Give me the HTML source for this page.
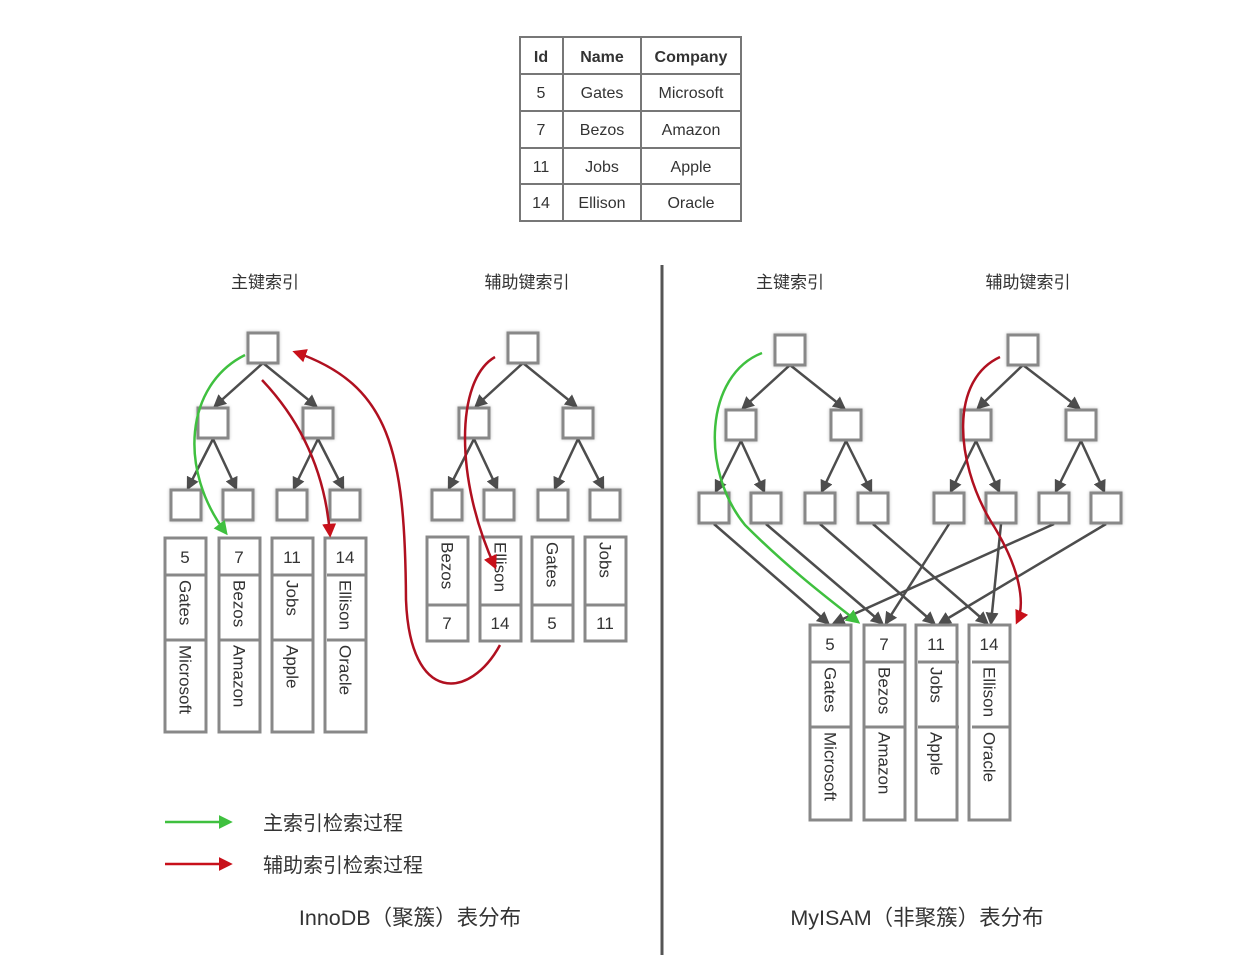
<!DOCTYPE html>
<html><head><meta charset="utf-8"><style>
html,body{margin:0;padding:0;background:#fff;}
svg{display:block;font-family:"Liberation Sans","Noto Sans CJK SC",sans-serif;}
</style></head><body>
<svg width="1255" height="957" viewBox="0 0 1255 957" xmlns="http://www.w3.org/2000/svg">
<defs>
<marker id="ag" viewBox="0 0 10 10" markerWidth="13" markerHeight="13" refX="8" refY="5" orient="auto" markerUnits="userSpaceOnUse"><path d="M0,0 L10,5 L0,10 Z" fill="#4d4d4d"/></marker>
<marker id="agl" viewBox="0 0 10 10" markerWidth="14" markerHeight="14" refX="8" refY="5" orient="auto" markerUnits="userSpaceOnUse"><path d="M0,0 L10,5 L0,10 Z" fill="#3fc03f"/></marker>
<marker id="ar" viewBox="0 0 10 10" markerWidth="14" markerHeight="14" refX="8" refY="5" orient="auto" markerUnits="userSpaceOnUse"><path d="M0,0 L10,5 L0,10 Z" fill="#c8101a"/></marker>
<filter id="sh" x="-30%" y="-30%" width="160%" height="160%"><feDropShadow dx="0" dy="0" stdDeviation="1.5" flood-color="#000" flood-opacity="0.25"/></filter>
</defs>

<g stroke="#777" stroke-width="2" fill="none">
<rect x="520" y="37" width="221" height="184"/>
<line x1="563" y1="37" x2="563" y2="221"/><line x1="641" y1="37" x2="641" y2="221"/>
<line x1="520" y1="74" x2="741" y2="74"/><line x1="520" y1="111" x2="741" y2="111"/>
<line x1="520" y1="148" x2="741" y2="148"/><line x1="520" y1="184" x2="741" y2="184"/>
</g>
<g font-size="16" fill="#333" text-anchor="middle">
<text x="541" y="62" font-weight="bold">Id</text><text x="602" y="62" font-weight="bold">Name</text><text x="691" y="62" font-weight="bold">Company</text>
<text x="541" y="98">5</text><text x="602" y="98">Gates</text><text x="691" y="98">Microsoft</text>
<text x="541" y="135">7</text><text x="602" y="135">Bezos</text><text x="691" y="135">Amazon</text>
<text x="541" y="172">11</text><text x="602" y="172">Jobs</text><text x="691" y="172">Apple</text>
<text x="541" y="208">14</text><text x="602" y="208">Ellison</text><text x="691" y="208">Oracle</text>
</g>

<g font-size="17" fill="#333" text-anchor="middle">
<text x="265" y="288">主键索引</text><text x="527" y="288">辅助键索引</text>
<text x="790" y="288">主键索引</text><text x="1028" y="288">辅助键索引</text>
</g>

<line x1="662" y1="265" x2="662" y2="955" stroke="#555" stroke-width="3"/>

<g stroke="#4d4d4d" stroke-width="2.5" marker-end="url(#ag)">
<line x1="263" y1="363" x2="215" y2="406"/><line x1="263" y1="363" x2="316" y2="406"/>
<line x1="213" y1="439" x2="188" y2="488"/><line x1="213" y1="439" x2="236" y2="488"/>
<line x1="318" y1="439" x2="294" y2="488"/><line x1="318" y1="439" x2="343" y2="488"/>
<line x1="523" y1="363" x2="476" y2="406"/><line x1="523" y1="363" x2="576" y2="406"/>
<line x1="474" y1="439" x2="449" y2="488"/><line x1="474" y1="439" x2="497" y2="488"/>
<line x1="578" y1="439" x2="555" y2="488"/><line x1="578" y1="439" x2="603" y2="488"/>
<line x1="790" y1="365" x2="743" y2="408"/><line x1="790" y1="365" x2="844" y2="408"/>
<line x1="741" y1="441" x2="716" y2="491"/><line x1="741" y1="441" x2="764" y2="491"/>
<line x1="846" y1="441" x2="822" y2="491"/><line x1="846" y1="441" x2="871" y2="491"/>
<line x1="1023" y1="365" x2="978" y2="408"/><line x1="1023" y1="365" x2="1079" y2="408"/>
<line x1="976" y1="441" x2="951" y2="491"/><line x1="976" y1="441" x2="999" y2="491"/>
<line x1="1081" y1="441" x2="1056" y2="491"/><line x1="1081" y1="441" x2="1104" y2="491"/>
<line x1="714" y1="524" x2="828" y2="623"/><line x1="766" y1="524" x2="882" y2="623"/>
<line x1="820" y1="524" x2="934" y2="623"/><line x1="873" y1="524" x2="987" y2="623"/>
<line x1="949" y1="524" x2="886" y2="623"/><line x1="1001" y1="524" x2="991" y2="623"/>
<line x1="1054" y1="524" x2="834" y2="623"/><line x1="1106" y1="524" x2="940" y2="623"/>
</g>

<g fill="#fff" stroke="#888" stroke-width="3" filter="url(#sh)">
<rect x="248" y="333" width="30" height="30"/><rect x="198" y="408" width="30" height="30"/><rect x="303" y="408" width="30" height="30"/>
<rect x="171" y="490" width="30" height="30"/><rect x="223" y="490" width="30" height="30"/><rect x="277" y="490" width="30" height="30"/><rect x="330" y="490" width="30" height="30"/>
<rect x="508" y="333" width="30" height="30"/><rect x="459" y="408" width="30" height="30"/><rect x="563" y="408" width="30" height="30"/>
<rect x="432" y="490" width="30" height="30"/><rect x="484" y="490" width="30" height="30"/><rect x="538" y="490" width="30" height="30"/><rect x="590" y="490" width="30" height="30"/>
<rect x="775" y="335" width="30" height="30"/><rect x="726" y="410" width="30" height="30"/><rect x="831" y="410" width="30" height="30"/>
<rect x="699" y="493" width="30" height="30"/><rect x="751" y="493" width="30" height="30"/><rect x="805" y="493" width="30" height="30"/><rect x="858" y="493" width="30" height="30"/>
<rect x="1008" y="335" width="30" height="30"/><rect x="961" y="410" width="30" height="30"/><rect x="1066" y="410" width="30" height="30"/>
<rect x="934" y="493" width="30" height="30"/><rect x="986" y="493" width="30" height="30"/><rect x="1039" y="493" width="30" height="30"/><rect x="1091" y="493" width="30" height="30"/>
</g>

<g fill="#fff" stroke="#888" stroke-width="3">
<rect x="165" y="538" width="41" height="194"/><rect x="219" y="538" width="41" height="194"/><rect x="272" y="538" width="41" height="194"/><rect x="325" y="538" width="41" height="194"/>
<rect x="427" y="537" width="41" height="104"/><rect x="480" y="537" width="41" height="104"/><rect x="532" y="537" width="41" height="104"/><rect x="585" y="537" width="41" height="104"/>
<rect x="810" y="625" width="41" height="195"/><rect x="864" y="625" width="41" height="195"/><rect x="916" y="625" width="41" height="195"/><rect x="969" y="625" width="41" height="195"/>
</g>
<g stroke="#888" stroke-width="3">
<line x1="165" y1="575" x2="366" y2="575" stroke-dasharray="41,13"/>
<line x1="165" y1="640" x2="366" y2="640" stroke-dasharray="41,13"/>
<line x1="427" y1="605" x2="626" y2="605" stroke-dasharray="41,12"/>
<line x1="810" y1="662" x2="1010" y2="662" stroke-dasharray="41,13"/>
<line x1="810" y1="727" x2="1010" y2="727" stroke-dasharray="41,13"/>
</g>
<g font-size="17" fill="#333" text-anchor="middle">
<text x="185" y="563">5</text><text x="239" y="563">7</text><text x="292" y="563">11</text><text x="345" y="563">14</text>
<text x="447" y="629">7</text><text x="500" y="629">14</text><text x="552" y="629">5</text><text x="605" y="629">11</text>
<text x="830" y="650">5</text><text x="884" y="650">7</text><text x="936" y="650">11</text><text x="989" y="650">14</text>
</g>
<g font-size="17" fill="#333" dominant-baseline="central">
<text transform="translate(185,580) rotate(90)">Gates</text><text transform="translate(185,645) rotate(90)">Microsoft</text>
<text transform="translate(239,580) rotate(90)">Bezos</text><text transform="translate(239,645) rotate(90)">Amazon</text>
<text transform="translate(292,580) rotate(90)">Jobs</text><text transform="translate(292,645) rotate(90)">Apple</text>
<text transform="translate(345,580) rotate(90)">Ellison</text><text transform="translate(345,645) rotate(90)">Oracle</text>
<text transform="translate(447,542) rotate(90)">Bezos</text><text transform="translate(500,542) rotate(90)">Ellison</text>
<text transform="translate(552,542) rotate(90)">Gates</text><text transform="translate(605,542) rotate(90)">Jobs</text>
<text transform="translate(830,667) rotate(90)">Gates</text><text transform="translate(830,732) rotate(90)">Microsoft</text>
<text transform="translate(884,667) rotate(90)">Bezos</text><text transform="translate(884,732) rotate(90)">Amazon</text>
<text transform="translate(936,667) rotate(90)">Jobs</text><text transform="translate(936,732) rotate(90)">Apple</text>
<text transform="translate(989,667) rotate(90)">Ellison</text><text transform="translate(989,732) rotate(90)">Oracle</text>
</g>

<g fill="none" stroke-width="2.5">
<path d="M245,355 C185,385 178,470 226,533" stroke="#3fc03f" marker-end="url(#agl)"/>
<path d="M262,380 C300,420 325,470 330,535" stroke="#b01020" marker-end="url(#ar)"/>
<path d="M500,645 C470,700 410,705 406,600 C405,450 390,385 295,352" stroke="#b01020" marker-end="url(#ar)"/>
<path d="M495,357 C455,380 455,480 495,567" stroke="#b01020" marker-end="url(#ar)"/>
<path d="M762,353 C705,375 700,470 745,525 C790,570 830,600 858,622" stroke="#3fc03f" marker-end="url(#agl)"/>
<path d="M1000,357 C950,380 955,460 990,520 C1022,570 1025,605 1017,622" stroke="#b01020" marker-end="url(#ar)"/>
<line x1="165" y1="822" x2="230" y2="822" stroke="#3fc03f" marker-end="url(#agl)"/>
<line x1="165" y1="864" x2="230" y2="864" stroke="#c8101a" marker-end="url(#ar)"/>
</g>

<g font-size="20" fill="#333">
<text x="263" y="830">主索引检索过程</text>
<text x="263" y="872">辅助索引检索过程</text>
</g>
<g font-size="21.5" fill="#333" text-anchor="middle">
<text x="410" y="925">InnoDB（聚簇）表分布</text>
<text x="917" y="925">MyISAM（非聚簇）表分布</text>
</g>
</svg>
</body></html>
